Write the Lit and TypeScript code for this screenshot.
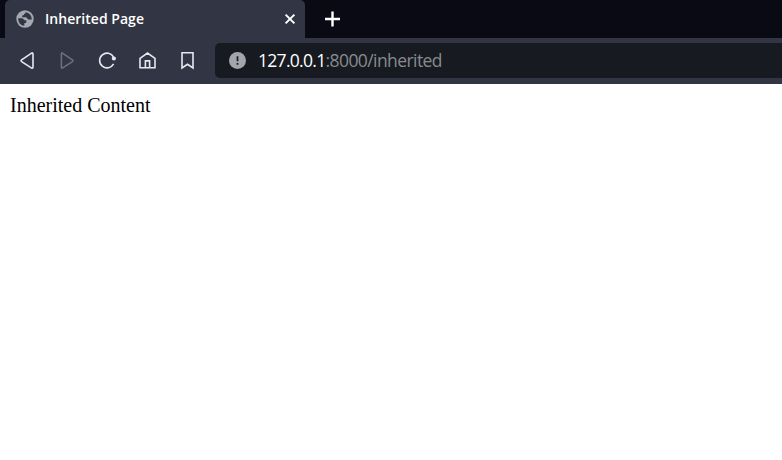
import { LitElement, html, css } from "lit";
import { customElement } from "lit/decorators.js";

@customElement("app-root")
export class AppRoot extends LitElement {
  static styles = css`
    :host {
      display: flex;
      flex-direction: column;
      height: 460px;
      overflow: hidden;
      background: #fff;
    }
    svg {
      display: block;
      fill: none;
      flex: none;
    }
    .tabs {
      display: flex;
      height: 38px;
      padding-left: 5px;
      background: #0a0a15;
      flex: none;
    }
    .tab {
      display: flex;
      align-items: center;
      box-sizing: border-box;
      width: 300px;
      padding: 0 9px 0 11px;
      background: #323543;
      border-radius: 5px 5px 0 0;
    }
    .title {
      flex: 1;
      margin-left: 11px;
      color: #fff;
      font: 600 14px/20px "Open Sans", "Noto Sans", sans-serif;
      letter-spacing: 0.03px;
      white-space: nowrap;
    }
    .plus {
      align-self: center;
      margin-left: 19px;
    }
    .toolbar {
      display: flex;
      align-items: center;
      height: 46px;
      padding-left: 17px;
      background: #323543;
      flex: none;
    }
    .nav {
      display: flex;
      gap: 20px;
      width: 198px;
      flex: none;
      stroke: #e6e8ef;
      stroke-width: 1.6;
    }
    .dim {
      stroke: #6c6f7c;
    }
    .address {
      display: flex;
      align-items: center;
      flex: 1;
      height: 35px;
      box-sizing: border-box;
      padding-left: 14px;
      background: #171a20;
      border-radius: 5px 0 0 5px;
      margin-bottom: 1px;
    }
    .url {
      margin: 0 0 2px 12px;
      color: #888b90;
      font: 400 17.5px/24px "Open Sans", "Noto Sans", sans-serif;
      letter-spacing: -0.58px;
      white-space: nowrap;
    }
    .host {
      color: #fff;
      letter-spacing: -0.7px;
    }
    .page {
      padding: 10px;
      color: #000;
      font: 20px/23px "Liberation Serif", serif;
    }
  `;

  render() {
    return html`
      <div class="tabs">
        <div class="tab">
          <svg width="18" height="18" viewBox="0 0 18 18">
            <circle cx="9" cy="9" r="8.7" fill="#a5a8b0" />
            <path d="M2.2 8.2H6.5L8.6 10.2H10.3V12.7L8.3 13.2V15.8C5 15.5 2 12.7 2.2 8.2Z" fill="#323543" />
            <path d="M9.4 2.3C12.6 2.4 15.8 5 15.8 9.4H12.2L10.2 7.2H6.2V5.6L8 5.1V3.7H9.4Z" fill="#323543" />
          </svg>
          <span class="title">Inherited Page</span>
          <svg width="12" height="12" viewBox="0 0 12 12" stroke="#fff" stroke-width="2">
            <path d="M1.6 1.6L10.4 10.4M10.4 1.6L1.6 10.4" />
          </svg>
        </div>
        <svg class="plus" width="17" height="16" viewBox="0 0 17 16" stroke="#fff" stroke-width="2.4">
          <path d="M1 8H16M8.5 0.5V15.5" />
        </svg>
      </div>
      <div class="toolbar">
        <div class="nav">
          <svg width="20" height="20" viewBox="0 0 20 20">
            <path d="M14.2 2.3Q16 1.2 16 3.2V15.9Q16 17.9 14.3 16.8L4.6 10.6Q3.5 9.7 4.6 8.8Z" />
          </svg>
          <svg class="dim" width="20" height="20" viewBox="0 0 20 20">
            <path d="M5.8 2.3Q4.4 1.2 4.4 3.2V15.9Q4.4 17.9 5.7 16.8L15.4 10.6Q16.5 9.7 15.4 8.8Z" />
          </svg>
          <svg width="20" height="20" viewBox="0 0 20 20">
            <path d="M16.6 6.1A7.4 7.4 0 1 0 16.6 12.9" />
            <circle cx="16.9" cy="7.5" r="2.1" fill="#e6e8ef" stroke="none" />
          </svg>
          <svg width="20" height="20" viewBox="0 0 20 20">
            <path d="M3 7.4L10.5 2L18 7.4V16.8H3ZM8.4 16.8V9.9H12.6V16.8" />
          </svg>
          <svg width="20" height="20" viewBox="0 0 20 20">
            <path d="M5 1.8H16V17L10.5 13.3L5 17Z" />
          </svg>
        </div>
        <div class="address">
          <svg width="17" height="17" viewBox="0 0 17 17">
            <circle cx="8.5" cy="8.5" r="8.5" fill="#a3a5aa" />
            <path d="M8.5 4.3V9.2M8.5 10.9V12.7" stroke="#171a20" stroke-width="1.7" />
          </svg>
          <span class="url"><span class="host">127.0.0.1</span>:8000/inherited</span>
        </div>
      </div>
      <div class="page">Inherited Content</div>
    `;
  }
}
